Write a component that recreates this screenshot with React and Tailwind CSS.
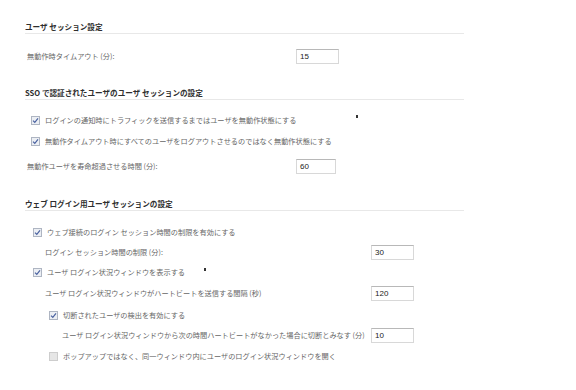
import React from "react";

const font = { fontFamily: '"Noto Sans CJK JP", "Noto Sans", sans-serif' };

function Check({ checked = true }) {
  return (
    <svg width="9" height="9" viewBox="0 0 9 9" className="shrink-0">
      <rect x="0.5" y="0.5" width="8" height="8" fill={checked ? "#eceff4" : "#e6e6e6"} stroke={checked ? "#aeb5c2" : "#cdcdcd"} />
      {checked && <path d="M2 4.6 L3.8 6.4 L7 2.4" fill="none" stroke="#4a62a0" strokeWidth="1.2" />}
    </svg>
  );
}

function Header({ children, className }) {
  return (
    <div className={"flex items-center h-[13px] border-b border-[#e8e8e8] text-[7.6px] font-bold text-[#2e2e2e] " + className}>
      <span className="pb-[1px]">{children}</span>
    </div>
  );
}

function Input({ value, w = "w-[43px]" }) {
  return (
    <div className={"h-[15px] bg-white border border-[#d8d8d8] border-t-[#b8b8b8] flex items-center pl-[3px] text-[8px] text-[#222] shrink-0 " + w} style={{ fontFamily: '"Liberation Sans", Arial, sans-serif' }}>
      {value}
    </div>
  );
}

function CheckRow({ checked, className, children }) {
  return (
    <div className={"flex items-center h-[14px] gap-[5px] text-[7.2px] text-[#666] " + className}>
      <Check checked={checked} />
      <span>{children}</span>
    </div>
  );
}

function LabelRow({ label, value, labelW, className, inputW }) {
  return (
    <div className={"flex items-center h-[15px] text-[7.2px] text-[#666] " + className}>
      <span className={"shrink-0 " + labelW}>{label}</span>
      <Input value={value} w={inputW} />
    </div>
  );
}

export default function App() {
  return (
    <div className="relative w-[576px] h-[390px] bg-white overflow-hidden" style={font}>
      <div className="ml-[25px] w-[439px] flex flex-col">
        <Header className="mt-[21px]">ユーザ セッション設定</Header>
        <LabelRow className="mt-[15px] pl-[2px]" labelW="w-[269px]" label="無動作時タイムアウト (分):" value="15" />

        <Header className="mt-[23px]">SSO で認証されたユーザのユーザ セッションの設定</Header>
        <CheckRow checked className="mt-[13px] pl-[6px]">ログインの通知時にトラフィックを送信するまではユーザを無動作状態にする</CheckRow>
        <CheckRow checked className="mt-[7px] pl-[6px]">無動作タイムアウト時にすべてのユーザをログアウトさせるのではなく無動作状態にする</CheckRow>
        <LabelRow className="mt-[11px] pl-[2px]" labelW="w-[269px]" inputW="w-[40px]" label="無動作ユーザを寿命超過させる時間 (分):" value="60" />

        <Header className="mt-[24px]">ウェブ ログイン用ユーザ セッションの設定</Header>
        <CheckRow checked className="mt-[14px] pl-[8px]">ウェブ接続のログイン セッション時間の制限を有効にする</CheckRow>
        <LabelRow className="mt-[6px] pl-[20px]" labelW="w-[326px]" label="ログイン セッション時間の制限 (分):" value="30" />
        <CheckRow checked className="mt-[5px] pl-[8px]">ユーザ ログイン状況ウィンドウを表示する</CheckRow>
        <LabelRow className="mt-[7px] pl-[20px]" labelW="w-[326px]" label="ユーザ ログイン状況ウィンドウがハートビートを送信する間隔 (秒)" value="120" />
        <CheckRow checked className="mt-[7px] pl-[24px]">切断されたユーザの検出を有効にする</CheckRow>
        <LabelRow className="mt-[6px] pl-[37px]" labelW="w-[309px]" label="ユーザ ログイン状況ウィンドウから次の時間ハートビートがなかった場合に切断とみなす (分)" value="10" />
        <CheckRow checked={false} className="mt-[6px] pl-[24px]">ポップアップではなく、同一ウィンドウ内にユーザのログイン状況ウィンドウを開く</CheckRow>
      </div>
      <span className="absolute left-[356px] top-[115px] w-[2px] h-[3px] bg-[#333]" />
      <span className="absolute left-[204px] top-[268px] w-[2px] h-[3px] bg-[#333]" />
    </div>
  );
}
